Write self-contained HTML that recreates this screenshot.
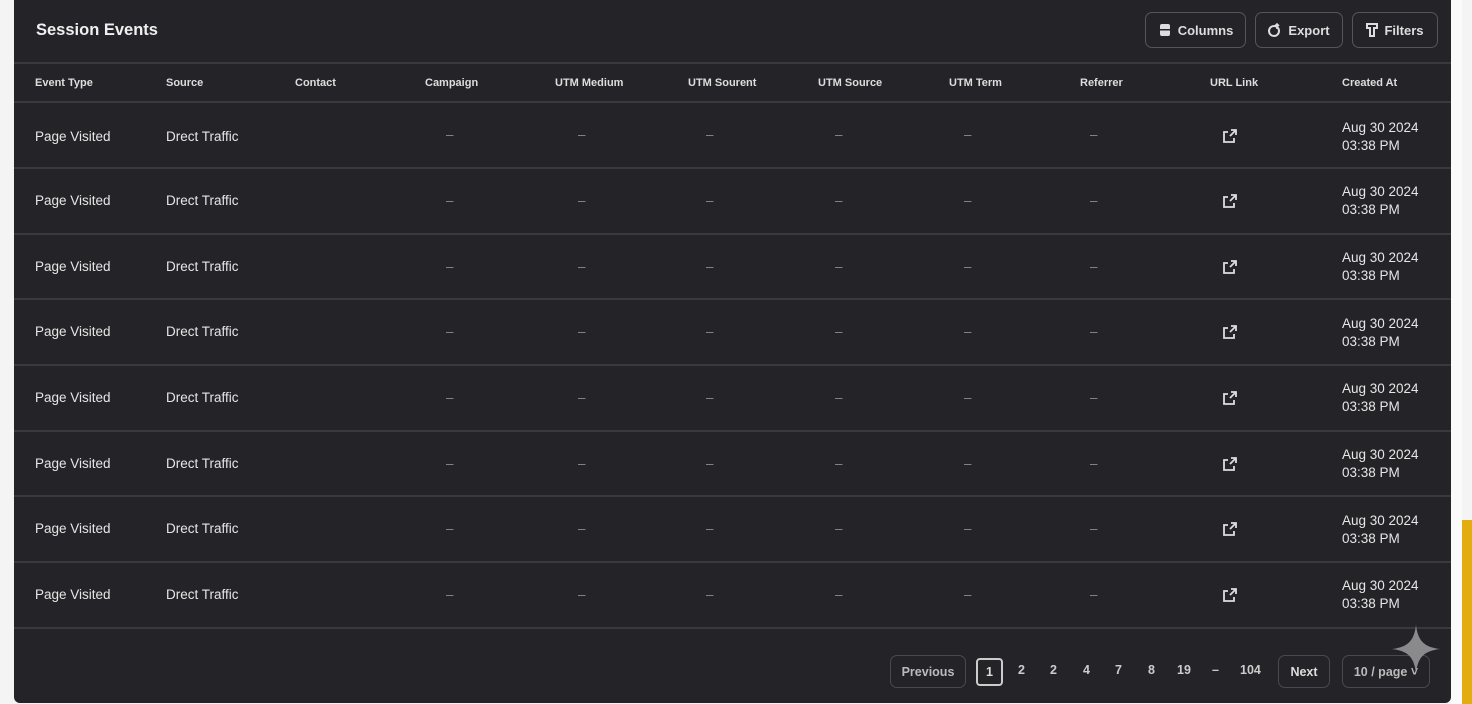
<!DOCTYPE html><html><head><meta charset="utf-8"><style>
*{margin:0;padding:0;box-sizing:border-box}
body{width:1472px;height:704px;background:#f4f4f4;position:relative;overflow:hidden;font-family:"Liberation Sans",sans-serif;color:#e6e6e6}
.p{position:absolute;left:14px;top:0;width:1437px;height:703px;background:#242428;border-radius:0 0 6px 6px}
.y{position:absolute;left:1462px;top:520px;width:10px;height:184px;background:#e3ad12}
.w{position:absolute;left:1451px;top:0;width:11px;height:704px;background:#fafafa}
.ln{position:absolute;left:14px;width:1437px;height:2px;background:#3a3a3e}
.t{position:absolute;white-space:nowrap}
.h{font-size:11px;font-weight:bold;top:77px;color:#ddd}
.b{position:absolute;height:36px;border:1.5px solid #56565a;border-radius:7px;font-size:13px;font-weight:bold;display:flex;align-items:center;justify-content:center;gap:6px;color:#ddd}
.r{position:absolute;left:14px;width:1437px;height:65px;font-size:13.5px}
.r div{position:absolute;top:24px}
.d{color:#888}
.pg{position:absolute;top:663px;font-size:12.5px;font-weight:bold;color:#ccc}
</style></head><body>
<div class="w"></div><div class="y"></div>
<div class="p"></div>
<div class="t" style="left:36px;top:21px;font-size:16.5px;font-weight:bold;color:#f0f0f0">Session Events</div>
<div class="b" style="left:1145px;top:12px;width:101px"><svg width="14" height="14" viewBox="0 0 14 14"><rect x="2" y="1" width="10" height="12" rx="2" fill="#ddd"/><rect x="2" y="6" width="10" height="1.5" fill="#242428"/></svg>Columns</div>
<div class="b" style="left:1255px;top:12px;width:88px"><svg width="14" height="14" viewBox="0 0 14 14"><circle cx="6" cy="8" r="5" fill="none" stroke="#ddd" stroke-width="2"/><path d="M9 1v5M7 3l2-2 2 2" stroke="#ddd" stroke-width="1.6" fill="none"/></svg>Export</div>
<div class="b" style="left:1352px;top:12px;width:86px"><svg width="12" height="14" viewBox="0 0 12 14"><path d="M1 1h10v4H8v8H4V5H1z" fill="none" stroke="#ddd" stroke-width="2"/></svg>Filters</div>
<div class="ln" style="top:62px"></div>
<div class="t h" style="left:35px">Event Type</div><div class="t h" style="left:166px">Source</div><div class="t h" style="left:295px">Contact</div><div class="t h" style="left:425px">Campaign</div><div class="t h" style="left:555px">UTM Medium</div><div class="t h" style="left:688px">UTM Sourent</div><div class="t h" style="left:818px">UTM Source</div><div class="t h" style="left:949px">UTM Term</div><div class="t h" style="left:1080px">Referrer</div><div class="t h" style="left:1210px">URL Link</div><div class="t h" style="left:1342px">Created At</div>
<div class="ln" style="top:101px"></div>

<div class="r" style="top:103px"><div style="left:21px;top:26px">Page Visited</div><div style="left:152px;top:26px">Drect Traffic</div><div class="d" style="left:432px">–</div><div class="d" style="left:564px">–</div><div class="d" style="left:692px">–</div><div class="d" style="left:821px">–</div><div class="d" style="left:950px">–</div><div class="d" style="left:1076px">–</div><div style="left:1208px;top:25px"><svg width="16" height="16" viewBox="0 0 16 16" fill="none" stroke="#ddd" stroke-width="1.8"><path d="M9 2h5v5M14 2L8 8M6 4H2v10h10v-4"/></svg></div><div style="left:1328px;top:16px;line-height:18px">Aug 30 2024<br>03:38 PM</div></div>
<div class="ln" style="top:167px"></div>
<div class="r" style="top:169px"><div style="left:21px;top:24px">Page Visited</div><div style="left:152px;top:24px">Drect Traffic</div><div class="d" style="left:432px">–</div><div class="d" style="left:564px">–</div><div class="d" style="left:692px">–</div><div class="d" style="left:821px">–</div><div class="d" style="left:950px">–</div><div class="d" style="left:1076px">–</div><div style="left:1208px;top:24px"><svg width="16" height="16" viewBox="0 0 16 16" fill="none" stroke="#ddd" stroke-width="1.8"><path d="M9 2h5v5M14 2L8 8M6 4H2v10h10v-4"/></svg></div><div style="left:1328px;top:14px;line-height:18px">Aug 30 2024<br>03:38 PM</div></div>
<div class="ln" style="top:233px"></div>
<div class="r" style="top:235px"><div style="left:21px">Page Visited</div><div style="left:152px">Drect Traffic</div><div class="d" style="left:432px">–</div><div class="d" style="left:564px">–</div><div class="d" style="left:692px">–</div><div class="d" style="left:821px">–</div><div class="d" style="left:950px">–</div><div class="d" style="left:1076px">–</div><div style="left:1208px"><svg width="16" height="16" viewBox="0 0 16 16" fill="none" stroke="#ddd" stroke-width="1.8"><path d="M9 2h5v5M14 2L8 8M6 4H2v10h10v-4"/></svg></div><div style="left:1328px;top:14px;line-height:18px">Aug 30 2024<br>03:38 PM</div></div>
<div class="ln" style="top:298px"></div>
<div class="r" style="top:300px"><div style="left:21px">Page Visited</div><div style="left:152px">Drect Traffic</div><div class="d" style="left:432px">–</div><div class="d" style="left:564px">–</div><div class="d" style="left:692px">–</div><div class="d" style="left:821px">–</div><div class="d" style="left:950px">–</div><div class="d" style="left:1076px">–</div><div style="left:1208px"><svg width="16" height="16" viewBox="0 0 16 16" fill="none" stroke="#ddd" stroke-width="1.8"><path d="M9 2h5v5M14 2L8 8M6 4H2v10h10v-4"/></svg></div><div style="left:1328px;top:15px;line-height:18px">Aug 30 2024<br>03:38 PM</div></div>
<div class="ln" style="top:364px"></div>
<div class="r" style="top:366px"><div style="left:21px">Page Visited</div><div style="left:152px">Drect Traffic</div><div class="d" style="left:432px">–</div><div class="d" style="left:564px">–</div><div class="d" style="left:692px">–</div><div class="d" style="left:821px">–</div><div class="d" style="left:950px">–</div><div class="d" style="left:1076px">–</div><div style="left:1208px"><svg width="16" height="16" viewBox="0 0 16 16" fill="none" stroke="#ddd" stroke-width="1.8"><path d="M9 2h5v5M14 2L8 8M6 4H2v10h10v-4"/></svg></div><div style="left:1328px;top:14px;line-height:18px">Aug 30 2024<br>03:38 PM</div></div>
<div class="ln" style="top:430px"></div>
<div class="r" style="top:432px"><div style="left:21px">Page Visited</div><div style="left:152px">Drect Traffic</div><div class="d" style="left:432px">–</div><div class="d" style="left:564px">–</div><div class="d" style="left:692px">–</div><div class="d" style="left:821px">–</div><div class="d" style="left:950px">–</div><div class="d" style="left:1076px">–</div><div style="left:1208px"><svg width="16" height="16" viewBox="0 0 16 16" fill="none" stroke="#ddd" stroke-width="1.8"><path d="M9 2h5v5M14 2L8 8M6 4H2v10h10v-4"/></svg></div><div style="left:1328px;top:14px;line-height:18px">Aug 30 2024<br>03:38 PM</div></div>
<div class="ln" style="top:495px"></div>
<div class="r" style="top:497px"><div style="left:21px">Page Visited</div><div style="left:152px">Drect Traffic</div><div class="d" style="left:432px">–</div><div class="d" style="left:564px">–</div><div class="d" style="left:692px">–</div><div class="d" style="left:821px">–</div><div class="d" style="left:950px">–</div><div class="d" style="left:1076px">–</div><div style="left:1208px"><svg width="16" height="16" viewBox="0 0 16 16" fill="none" stroke="#ddd" stroke-width="1.8"><path d="M9 2h5v5M14 2L8 8M6 4H2v10h10v-4"/></svg></div><div style="left:1328px;top:15px;line-height:18px">Aug 30 2024<br>03:38 PM</div></div>
<div class="ln" style="top:561px"></div>
<div class="r" style="top:563px"><div style="left:21px">Page Visited</div><div style="left:152px">Drect Traffic</div><div class="d" style="left:432px">–</div><div class="d" style="left:564px">–</div><div class="d" style="left:692px">–</div><div class="d" style="left:821px">–</div><div class="d" style="left:950px">–</div><div class="d" style="left:1076px">–</div><div style="left:1208px"><svg width="16" height="16" viewBox="0 0 16 16" fill="none" stroke="#ddd" stroke-width="1.8"><path d="M9 2h5v5M14 2L8 8M6 4H2v10h10v-4"/></svg></div><div style="left:1328px;top:14px;line-height:18px">Aug 30 2024<br>03:38 PM</div></div>
<div class="ln" style="top:627px"></div>

<div class="b" style="left:890px;top:655px;width:76px;height:33px;font-size:12.5px;border-color:#4a4a4e;color:#bbb">Previous</div>
<div class="b" style="left:976px;top:658px;width:27px;height:28px;border:2px solid #ccc;border-radius:4px;font-size:12.5px">1</div>
<div class="pg" style="left:1018px">2</div><div class="pg" style="left:1050px">2</div><div class="pg" style="left:1083px">4</div><div class="pg" style="left:1115px">7</div><div class="pg" style="left:1148px">8</div><div class="pg" style="left:1177px">19</div><div class="pg" style="left:1212px">–</div><div class="pg" style="left:1240px">104</div>
<div class="b" style="left:1278px;top:655px;width:52px;height:33px;font-size:12.5px;border-color:#4a4a4e">Next</div>
<div class="b" style="left:1342px;top:655px;width:88px;height:33px;font-size:12.5px;border-color:#4a4a4e;color:#bbb">10 / page ˅</div>
<svg style="position:absolute;left:1390px;top:623px" width="52" height="52" viewBox="0 0 52 52"><path d="M26 2C28 18 34 24 50 26C34 28 28 34 26 50C24 34 18 28 2 26C18 24 24 18 26 2Z" fill="#8a8a8c"/></svg>
</body></html>
